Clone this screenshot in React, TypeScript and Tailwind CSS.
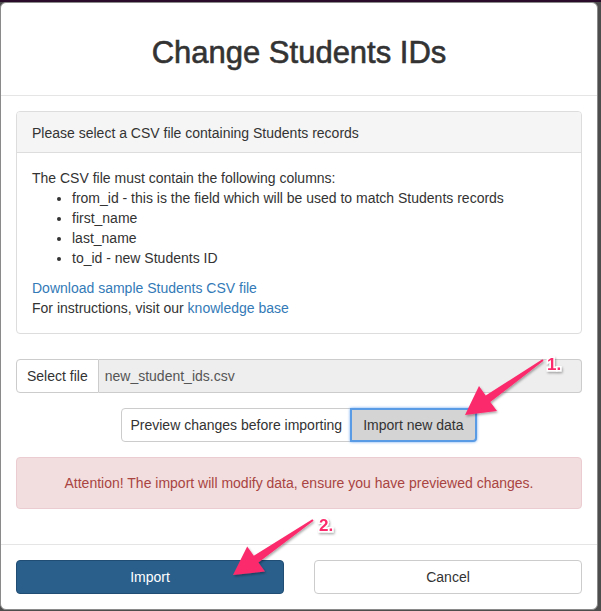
import React from 'react';

const font = { fontFamily: '"Liberation Sans", Arial, sans-serif' };

const Arrows: React.FC = () => (
    <svg className="pointer-events-none absolute left-0 top-0" width="601" height="611" viewBox="0 0 601 611">
        <defs>
            <filter id="sh" x="-20%" y="-20%" width="140%" height="140%">
                <feDropShadow dx="1" dy="1.5" stdDeviation="1" floodColor="#000" floodOpacity="0.35" />
            </filter>
        </defs>
        <g fill="#fb2c6c" filter="url(#sh)">
            <polygon points="542.4,357.2 485.7,393.5 479,384 465,413 497,409 490.3,400.1 543.6,358.8" />
            <polygon points="312.4,517.2 253.8,553.8 247.2,544.6 233,573 265,569.6 258.4,560.4 313.6,518.8" />
        </g>
        <g fontFamily='"Liberation Sans", Arial, sans-serif' fontWeight="bold" fontSize="17" fill="#fb2c6c" stroke="#fff" strokeWidth="3" paintOrder="stroke" filter="url(#sh)">
            <text x="547" y="368">1.</text>
            <text x="319" y="529">2.</text>
        </g>
    </svg>
);

export default function App() {
    return (
        <div className="relative h-[611px] w-[601px] overflow-hidden border-t-2 border-[#2a0c2a] bg-[#4d4d4d]" style={font}>
            <div className="flex w-[598px] flex-col rounded-[6px] border border-[#8a8a8a] bg-white text-[14px] leading-[20px] text-[#333]">
                <div className="flex h-[93px] items-center justify-center border-b border-[#e5e5e5] pt-[6px]">
                    <h3 className="text-[31px] font-normal leading-none text-[#333] [-webkit-text-stroke:0.6px_#333]">Change Students IDs</h3>
                </div>

                <div className="px-[15px] pt-[15px]">
                    <div className="rounded-[4px] border border-[#ddd]">
                        <div className="flex h-[41px] items-center rounded-t-[3px] border-b border-[#ddd] bg-[#f5f5f5] px-[15px] pt-px">
                            Please select a CSV file containing Students records
                        </div>
                        <div className="p-[15px]">
                            <p>The CSV file must contain the following columns:</p>
                            <ul className="mb-[10px] list-disc pl-10">
                                <li>from_id - this is the field which will be used to match Students records</li>
                                <li>first_name</li>
                                <li>last_name</li>
                                <li>to_id - new Students ID</li>
                            </ul>
                            <a className="text-[#337ab7]" href="#">Download sample Students CSV file</a>
                            <p>
                                For instructions, visit our <a className="text-[#337ab7]" href="#">knowledge base</a>
                            </p>
                        </div>
                    </div>

                    <div className="mt-[25px] flex h-[34px]">
                        <button className="rounded-l-[4px] border border-[#ccc] bg-white px-[10px] text-[#333]">Select file</button>
                        <div className="flex flex-1 items-center rounded-r-[4px] border border-l-0 border-[#ccc] bg-[#eee] pl-[6px] text-[#555]">
                            new_student_ids.csv
                        </div>
                    </div>

                    <div className="mt-[15px] flex justify-center">
                        <button className="h-[34px] rounded-l-[4px] border border-[#ccc] bg-white px-[8px] text-[#333]">
                            Preview changes before importing
                        </button>
                        <button className="-ml-px h-[34px] rounded-r-[4px] border-2 border-[#5a9be6] bg-[#d4d4d4] px-[11px] text-[#333] shadow-[0_0_3px_#6aa8f0]">
                            Import new data
                        </button>
                    </div>

                    <div className="mt-[15px] mb-[35px] rounded-[4px] border border-[#ebccd1] bg-[#f2dede] p-[15px] text-center text-[#a94442]">
                        Attention! The import will modify data, ensure you have previewed changes.
                    </div>
                </div>

                <div className="flex gap-[30px] border-t border-[#e5e5e5] p-[15px]">
                    <button className="h-[34px] flex-1 rounded-[4px] border border-[#204d74] bg-[#2a5f8c] text-white">Import</button>
                    <button className="h-[34px] flex-1 rounded-[4px] border border-[#ccc] bg-white text-[#333]">Cancel</button>
                </div>
            </div>
            <Arrows />
        </div>
    );
}
